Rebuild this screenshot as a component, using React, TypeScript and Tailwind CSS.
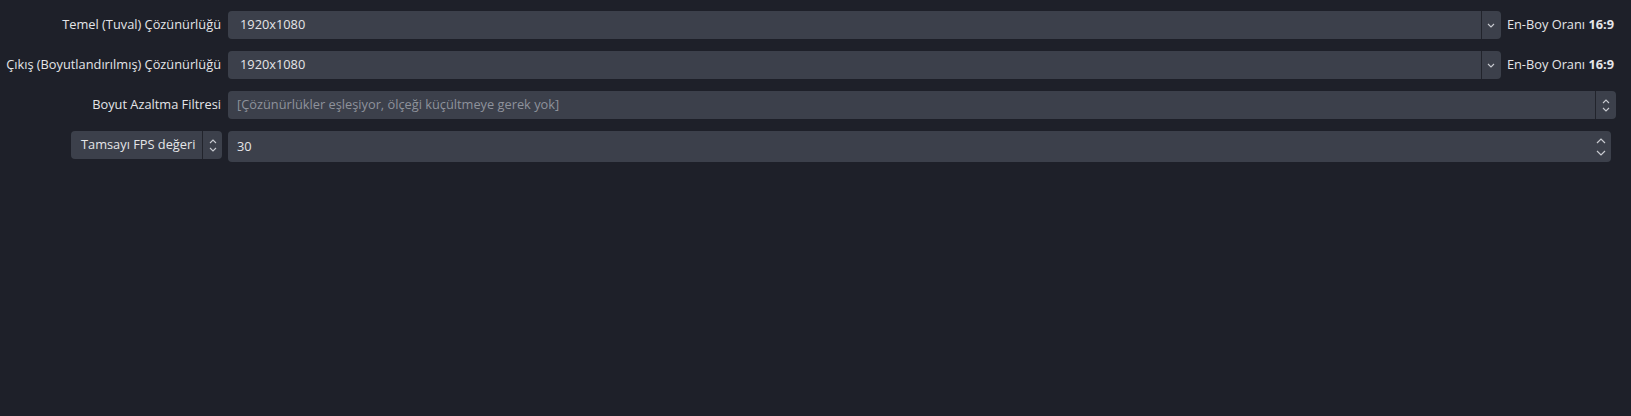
import React from "react";

const Chevron = ({ dir = "down", className = "" }: { dir?: "up" | "down"; className?: string }) => (
  <svg width="8" height="5" viewBox="0 0 8 5" className={className}>
    <path
      d={dir === "down" ? "M1 1 L4 4 L7 1" : "M1 4 L4 1 L7 4"}
      fill="none"
      stroke="#c8cad0"
      strokeWidth="1.1"
    />
  </svg>
);

const UpDown = () => (
  <div className="flex flex-col items-center gap-[3px]">
    <Chevron dir="up" />
    <Chevron dir="down" />
  </div>
);

const Label = ({ children }: { children: React.ReactNode }) => (
  <div className="w-[222px] shrink-0 text-right text-[#e4e5e8] pr-[1px]">{children}</div>
);

export default function App() {
  return (
    <div
      className="w-[1631px] h-[416px] bg-[#1e2029] text-[12.8px] pt-[11px] pr-[17px]"
      style={{ fontFamily: '"Open Sans", "Noto Sans", sans-serif' }}
    >
      <div className="flex flex-col gap-[12px]">
        {/* Row 1 */}
        <div className="flex items-center h-[28px]">
          <Label>Temel (Tuval) Çözünürlüğü</Label>
          <div className="ml-[6px] flex-1 h-[28px] flex rounded-[4px] bg-[#3c404b]">
            <div className="flex-1 flex items-center pl-[12px] text-[#e4e5e8]">1920x1080</div>
            <div className="w-[20px] border-l border-[#22242c] flex items-center justify-center">
              <Chevron />
            </div>
          </div>
          <div className="ml-[6px] text-[#e4e5e8] whitespace-nowrap">
            En-Boy Oranı <span className="font-bold">16:9</span>
          </div>
        </div>
        {/* Row 2 */}
        <div className="flex items-center h-[28px]">
          <Label>Çıkış (Boyutlandırılmış) Çözünürlüğü</Label>
          <div className="ml-[6px] flex-1 h-[28px] flex rounded-[4px] bg-[#3c404b]">
            <div className="flex-1 flex items-center pl-[12px] text-[#e4e5e8]">1920x1080</div>
            <div className="w-[20px] border-l border-[#22242c] flex items-center justify-center">
              <Chevron />
            </div>
          </div>
          <div className="ml-[6px] text-[#e4e5e8] whitespace-nowrap">
            En-Boy Oranı <span className="font-bold">16:9</span>
          </div>
        </div>
        {/* Row 3 */}
        <div className="flex items-center h-[28px]">
          <Label>Boyut Azaltma Filtresi</Label>
          <div className="ml-[6px] flex-1 h-[28px] flex rounded-[4px] bg-[#3c404b] mr-[-2px]">
            <div className="flex-1 flex items-center pl-[9px] text-[#8e929b]">
              [Çözünürlükler eşleşiyor, ölçeği küçültmeye gerek yok]
            </div>
            <div className="w-[21px] border-l border-[#22242c] flex items-center justify-center">
              <UpDown />
            </div>
          </div>
        </div>
        {/* Row 4 */}
        <div className="flex items-start h-[31px]">
          <div className="w-[222px] shrink-0 flex justify-end">
            <div className="w-[151px] h-[28px] flex rounded-[4px] bg-[#3c404b]">
              <div className="flex-1 flex items-center pl-[10px] text-[#e4e5e8]">Tamsayı FPS değeri</div>
              <div className="w-[20px] border-l border-[#22242c] flex items-center justify-center">
                <UpDown />
              </div>
            </div>
          </div>
          <div className="ml-[6px] flex-1 h-[31px] flex rounded-[4px] bg-[#3c404b] mr-[3px]">
            <div className="flex-1 flex items-center pl-[9px] text-[#e4e5e8]">30</div>
            <div className="w-[20px] flex flex-col items-center justify-center gap-[6px]">
              <svg width="10" height="6" viewBox="0 0 10 6">
                <path d="M1 5 L5 1 L9 5" fill="none" stroke="#c8cad0" strokeWidth="1.2" />
              </svg>
              <svg width="10" height="6" viewBox="0 0 10 6">
                <path d="M1 1 L5 5 L9 1" fill="none" stroke="#c8cad0" strokeWidth="1.2" />
              </svg>
            </div>
          </div>
        </div>
      </div>
    </div>
  );
}
